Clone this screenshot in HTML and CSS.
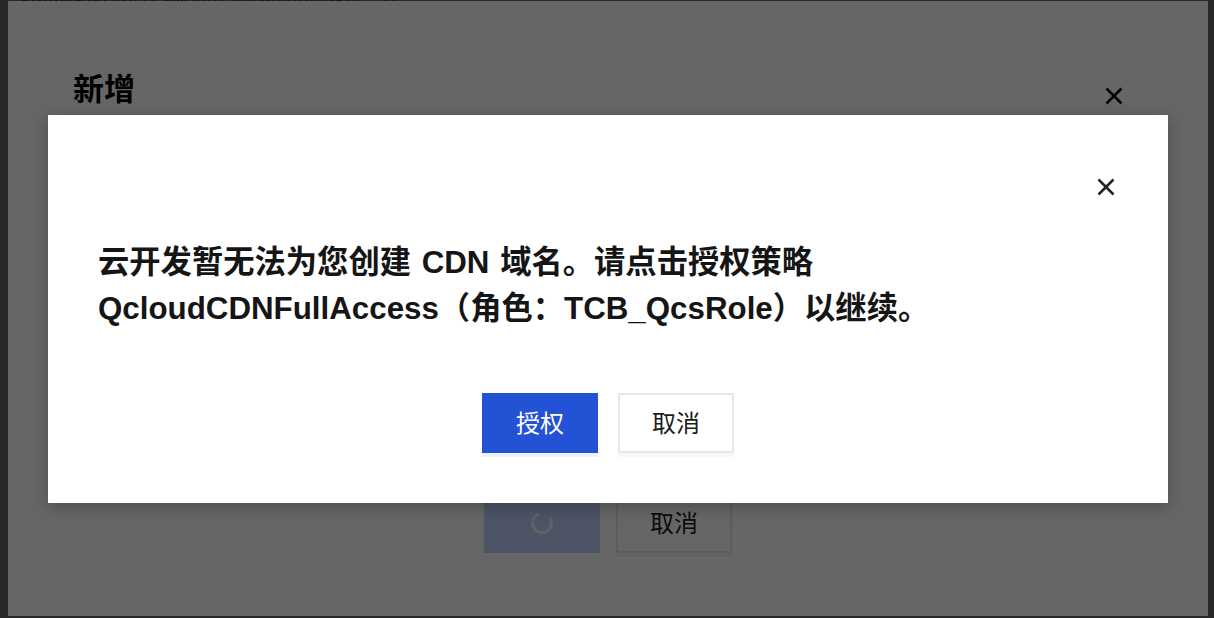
FILE: index.html
```html
<!DOCTYPE html>
<html lang="zh-CN">
<head>
  <meta charset="UTF-8" />
  <meta name="viewport" content="width=device-width, initial-scale=1" />
  <title>新增</title>
  <link rel="stylesheet" href="styles.css">
</head>
<body>
  <div class="page">
    <div class="page-line">请先完成域名配置，然后前往 <a href="#">静态网站托管设置</a> 查看</div>
  </div>

  <div class="mask"></div>

  <!-- 新增 dialog (behind) -->
  <div class="dialog dialog-back">
    <h2 class="dialog-title">新增</h2>
    <button class="close-btn close-back" aria-label="关闭">
      <svg width="18" height="18" viewBox="0 0 18 18"><path d="M1.5 1.5 L16.5 16.5 M16.5 1.5 L1.5 16.5" stroke="#000" stroke-width="2.5" fill="none"/></svg>
    </button>
    <div class="dialog-footer footer-back">
      <button class="btn btn-loading" aria-label="加载中">
        <svg width="24" height="24" viewBox="0 0 24 24"><circle cx="12" cy="12" r="9.5" stroke="#ffffff" stroke-opacity="0.75" stroke-width="3" fill="none" stroke-dasharray="46 14" transform="rotate(-30 12 12)"/></svg>
      </button>
      <button class="btn btn-default">取消</button>
    </div>
  </div>

  <div class="mask"></div>

  <!-- 授权 dialog -->
  <div class="dialog dialog-front">
    <button class="close-btn close-front" aria-label="关闭">
      <svg width="18" height="18" viewBox="0 0 18 18"><path d="M1.5 1.5 L16.5 16.5 M16.5 1.5 L1.5 16.5" stroke="#222" stroke-width="2.5" fill="none"/></svg>
    </button>
    <p class="dialog-text">云开发暂无法为您创建 CDN 域名。请点击授权策略 QcloudCDNFullAccess（角色：TCB_QcsRole）以继续。</p>
    <div class="dialog-footer footer-front">
      <button class="btn btn-primary">授权</button>
      <button class="btn btn-default">取消</button>
    </div>
  </div>
</body>
</html>
```

FILE: styles.css
```css
:root {
  --blue: #2352d4;
  --text: #151515;
  --border: #e6e6ee;
}

body {
  margin: 0;
  height: 100vh;
  overflow: hidden;
  background: #f3f4f6;
  font-family: "Liberation Sans", "Noto Sans CJK SC", sans-serif;
}

.page {
  padding: 0 20px;
}

.page-line {
  margin-top: -12px;
  font-size: 16px;
  line-height: 15px;
  color: #333;
}

.page-line a {
  color: #2352d4;
}

.mask {
  position: fixed;
  inset: 0;
  background: rgba(0, 0, 0, 0.6);
}

.dialog {
  position: fixed;
  background: #fff;
  box-sizing: border-box;
  display: flex;
  flex-direction: column;
}

.dialog-back {
  left: 8px;
  top: 1px;
  width: 1200px;
  height: 615px;
  padding: 66px 65px 63px;
}

.dialog-front {
  left: 48px;
  top: 115px;
  width: 1120px;
  height: 388px;
  padding: 125px 50px 50px;
  box-shadow: 0 4px 16px rgba(0, 0, 0, 0.25);
}

.dialog-title {
  margin: 0;
  font-family: "Noto Sans CJK SC", sans-serif;
  font-size: 31px;
  line-height: 40px;
  font-weight: bold;
  color: #000;
}

.close-btn {
  position: absolute;
  padding: 0;
  border: none;
  background: none;
  width: 18px;
  height: 18px;
  cursor: pointer;
}

.close-btn svg {
  display: block;
}

.close-back {
  top: 86px;
  right: 85px;
}

.close-front {
  top: 63px;
  right: 53px;
}

.dialog-text {
  margin: 0;
  font-size: 31.3px;
  line-height: 46px;
  font-weight: bold;
  color: var(--text);
  word-spacing: 2px;
}

.dialog-footer {
  margin-top: auto;
  display: flex;
  justify-content: center;
}

.footer-back {
  gap: 16px;
}

.footer-front {
  gap: 20px;
}

.btn {
  width: 116px;
  height: 60px;
  box-sizing: border-box;
  border: 2px solid var(--border);
  background: #fff;
  font-family: "Noto Sans CJK SC", sans-serif;
  font-size: 24px;
  color: #1c1c1c;
  cursor: pointer;
  display: flex;
  align-items: center;
  justify-content: center;
  padding: 0 0 4px;
}

.btn-primary {
  background: var(--blue);
  border-color: var(--blue);
  color: #fff;
  box-shadow: 0 4px 0 #eef2fc;
}

.btn-loading {
  background: #c0d2ff;
  border-color: #c0d2ff;
  padding: 0;
}

.btn-default {
  box-shadow: 0 4px 0 #f8f8fa;
}
```
